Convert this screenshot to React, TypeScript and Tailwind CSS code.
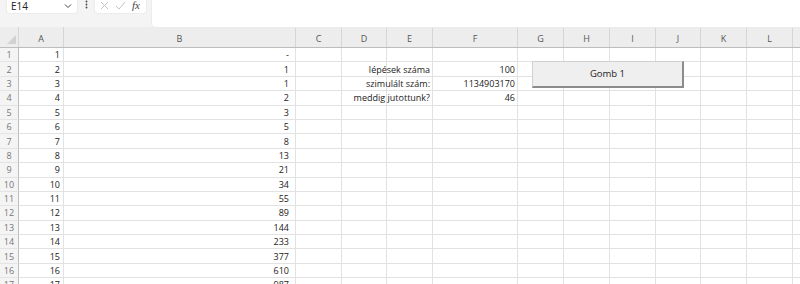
import React from "react";

const cols = [
  { id: "A", w: "w-[45px]" },
  { id: "B", w: "w-[232px]" },
  { id: "C", w: "w-[46px]" },
  { id: "D", w: "w-[45px]" },
  { id: "E", w: "w-[46px]" },
  { id: "F", w: "w-[85px]" },
  { id: "G", w: "w-[46px]" },
  { id: "H", w: "w-[46px]" },
  { id: "I", w: "w-[46px]" },
  { id: "J", w: "w-[45px]" },
  { id: "K", w: "w-[46px]" },
  { id: "L", w: "w-[46px]" },
  { id: "M", w: "w-[46px]" },
];

const fib = ["-", "1", "1", "2", "3", "5", "8", "13", "21", "34", "55", "89", "144", "233", "377", "610", "987"];

const labels: Record<number, [string, string]> = {
  2: ["lépések száma", "100"],
  3: ["szimulált szám:", "1134903170"],
  4: ["meddig jutottunk?", "46"],
};

const cellText = (row: number, col: string) => {
  if (col === "A") return { text: String(row), pad: "pr-[3px]" };
  if (col === "B") return { text: fib[row - 1], pad: "pr-[6px]" };
  if (col === "E" && labels[row]) return { text: labels[row][0], pad: "pr-[2px]" };
  if (col === "F" && labels[row]) return { text: labels[row][1], pad: "pr-[2px]" };
  return null;
};

const FormulaBar = () => (
  <div className="h-[27px] bg-[#f4f4f4] flex items-start relative">
    <div className="ml-[7px] w-[70px] h-[13px] bg-white rounded-b-[3px] flex items-center justify-between px-[4px] shadow-[0_0_0_1px_#ececec]">
      <span className="text-[10px] leading-none text-[#222] mt-[-2px]">E14</span>
      <svg width="8" height="6" viewBox="0 0 8 6" className="mt-[-2px] mr-[1px]">
        <path d="M1 1.5 L4 4.5 L7 1.5" fill="none" stroke="#444" strokeWidth="1" />
      </svg>
    </div>
    <div className="w-[18px] flex justify-center">
      <svg width="3" height="9" viewBox="0 0 3 9">
        <circle cx="1.5" cy="1.5" r="0.9" fill="#444" />
        <circle cx="1.5" cy="4.5" r="0.9" fill="#444" />
        <circle cx="1.5" cy="7.5" r="0.9" fill="#444" />
      </svg>
    </div>
    <div className="w-[51px] h-[13px] bg-white rounded-b-[3px] flex items-center gap-[6px] pl-[5px] shadow-[0_0_0_1px_#ececec]">
      <svg width="9" height="9" viewBox="0 0 9 9" className="mt-[-2px]">
        <path d="M1 1 L8 8 M8 1 L1 8" stroke="#c4c4c4" strokeWidth="1" />
      </svg>
      <svg width="11" height="9" viewBox="0 0 11 9" className="mt-[-2px]">
        <path d="M1 5 L4 8 L10 1" fill="none" stroke="#c4c4c4" strokeWidth="1" />
      </svg>
      <span className="text-[11px] leading-none italic text-[#444] font-['Liberation_Serif',serif] mt-[-3px]">fx</span>
    </div>
    <div className="ml-[6px] flex-1 h-[27px] bg-white rounded-bl-[4px] shadow-[0_0_0_1px_#ececec]" />
  </div>
);

const HeaderRow = () => (
  <div className="flex h-[21px] bg-[#ededed] border-b border-[#bdbdbd]">
    <div className="w-[19px] shrink-0 border-r border-[#d6d6d6] flex items-end justify-end pb-[3px] pr-[2px]">
      <svg width="9" height="9" viewBox="0 0 9 9">
        <path d="M9 0 L9 9 L0 9 Z" fill="#d2d2d2" />
      </svg>
    </div>
    {cols.map((c) => (
      <div
        key={c.id}
        className={`${c.w} shrink-0 border-r border-[#d6d6d6] flex items-end justify-center pb-[4px] text-[9px] leading-none text-[#555]`}
      >
        {c.id}
      </div>
    ))}
  </div>
);

const Row = ({ row }: { row: number }) => (
  <div className="flex h-[14.4px]">
    <div className="w-[19px] shrink-0 bg-[#f4f4f4] border-r border-[#bdbdbd] border-b border-b-[#e4e4e4] flex items-center justify-center text-[9px] leading-none text-[#777]">
      {row}
    </div>
    {cols.map((c) => {
      const t = cellText(row, c.id);
      return (
        <div
          key={c.id}
          className={`${c.w} shrink-0 border-r border-b border-[#e2e2e2] flex items-center justify-end text-[9px] leading-none text-[#222]`}
        >
          {t && <span className={`${t.pad} whitespace-nowrap shrink-0`}>{t.text}</span>}
        </div>
      );
    })}
  </div>
);

export default function App() {
  const rows = Array.from({ length: 17 }, (_, i) => i + 1);
  return (
    <div className="w-[800px] h-[284px] overflow-hidden bg-white relative font-['Open_Sans',sans-serif]">
      <FormulaBar />
      <HeaderRow />
      <div>
        {rows.map((r) => (
          <Row key={r} row={r} />
        ))}
      </div>
      <button className="absolute left-[532px] top-[61px] w-[152px] h-[27px] bg-[#efefef] border border-[#d0d0d0] border-r-[2px] border-b-[2px] border-r-[#8c8c8c] border-b-[#8c8c8c] text-[9.5px] text-[#222] flex items-center justify-center">
        Gomb 1
      </button>
    </div>
  );
}
